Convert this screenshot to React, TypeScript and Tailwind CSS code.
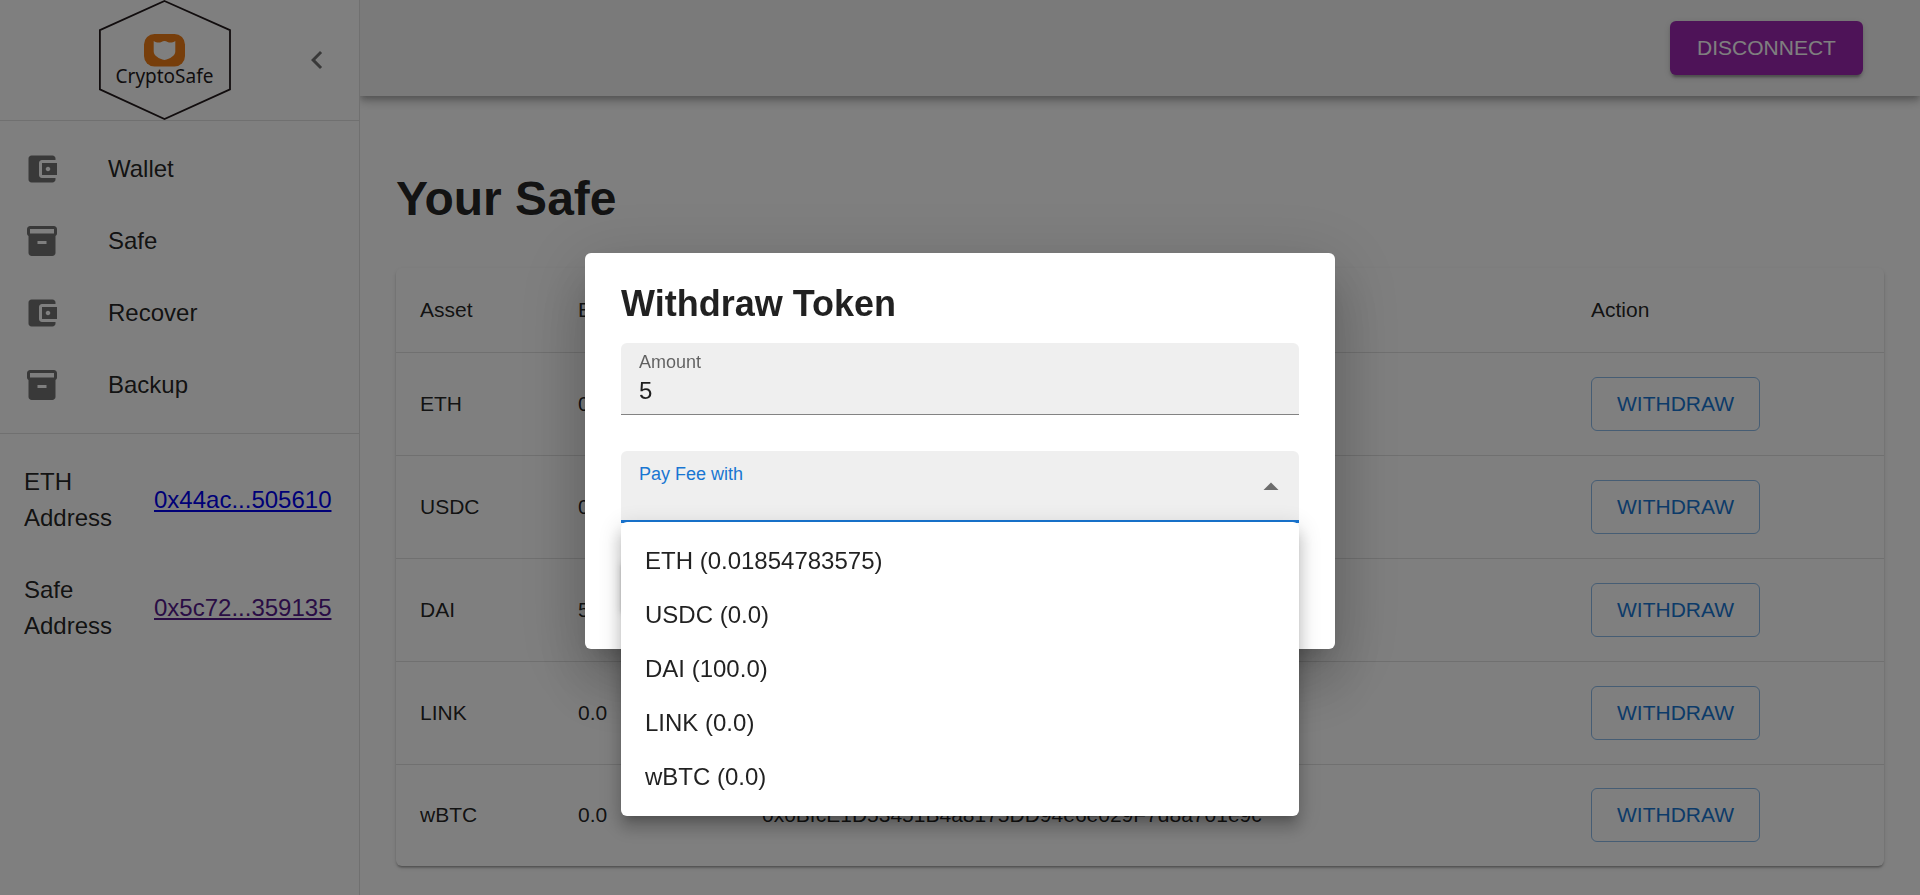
import React, { useState } from "react";

const WALLET_PATH =
  "M21 18v1c0 1.1-.9 2-2 2H5c-1.11 0-2-.9-2-2V5c0-1.1.89-2 2-2h14c1.1 0 2 .9 2 2v1h-9c-1.11 0-2 .9-2 2v8c0 1.1.89 2 2 2h9zm-9-2h10V8H12v8zm4-2.5c-.83 0-1.5-.67-1.5-1.5s.67-1.5 1.5-1.5 1.5.67 1.5 1.5-.67 1.5-1.5 1.5z";
const SAFE_PATH =
  "M20 2H4c-1 0-2 .9-2 2v3.01c0 .72.43 1.34 1 1.69V20c0 1.1 1.1 2 2 2h14c.9 0 2-.9 2-2V8.7c.57-.35 1-.97 1-1.69V4c0-1.1-1-2-2-2zm-5 12H9v-2h6v2zm5-7H4V4l16-.02V7z";
const CHEVRON_LEFT_PATH = "M15.41 7.41 14 6l-6 6 6 6 1.41-1.41L10.83 12z";
const ARROW_UP_PATH = "M7 14l5-5 5 5z";

const NAV = [
  { label: "Wallet", icon: WALLET_PATH },
  { label: "Safe", icon: SAFE_PATH },
  { label: "Recover", icon: WALLET_PATH },
  { label: "Backup", icon: SAFE_PATH },
];

const ADDRESSES = [
  { label: "ETH Address", value: "0x44ac...505610", color: "text-[#0000ee]" },
  { label: "Safe Address", value: "0x5c72...359135", color: "text-[#551a8b]" },
];

const ASSETS = [
  { name: "ETH", balance: "0.0", address: "" },
  { name: "USDC", balance: "0.0", address: "" },
  { name: "DAI", balance: "5.0", address: "" },
  { name: "LINK", balance: "0.0", address: "" },
  {
    name: "wBTC",
    balance: "0.0",
    address: "0x0BfcE1D53451B4a8175DD94e6e029F7d8a701e9c",
  },
];

const FEE_OPTIONS = [
  "ETH (0.01854783575)",
  "USDC (0.0)",
  "DAI (100.0)",
  "LINK (0.0)",
  "wBTC (0.0)",
];

function Icon({ path }: { path: string }) {
  return (
    <svg viewBox="0 0 24 24" className="size-9 shrink-0 fill-black/55" aria-hidden="true">
      <path d={path} />
    </svg>
  );
}

function Logo() {
  return (
    <svg
      viewBox="0 0 132 120"
      className="h-[120px] w-[132px]"
      role="img"
      aria-label="CryptoSafe logo"
    >
      <path
        d="M65.5 1 131 30.2v59.2L65.5 119 0.9 89.4V30.2z"
        fill="none"
        stroke="#231a1c"
        strokeWidth="1.8"
      />
      <rect x="45" y="34" width="41" height="32.5" rx="10.5" fill="#ee7d16" />
      <path
        d="M54.7 41c2.6 1.7 5.6 1.9 7.7.9 1.200-.6 2-.9 3.100-.9s1.900.3 3.100.9c2.100 1 5.100.8 7.700-.9v10.500c0 4.200-5.300 7.300-10.800 8.500-5.500-1.200-10.800-4.300-10.800-8.500z"
        fill="#fff"
      />
      <text
        x="65.5"
        y="83"
        textAnchor="middle"
        fontSize="19"
        fill="#231a1c"
        fontFamily='"Noto Sans", sans-serif'
      >
        CryptoSafe
      </text>
    </svg>
  );
}

function Sidebar() {
  return (
    <aside className="relative z-10 w-[360px] shrink-0 border-r border-black/12 bg-white">
      <div className="flex h-[120px] items-center justify-end gap-14 pr-3">
        <Logo />
        <button type="button" aria-label="Collapse menu" className="rounded-full p-3">
          <Icon path={CHEVRON_LEFT_PATH} />
        </button>
      </div>
      <nav className="border-y border-black/12 py-3">
        {NAV.map((item) => (
          <a key={item.label} href="#" className="flex h-[72px] items-center gap-12 px-6">
            <Icon path={item.icon} />
            <span>{item.label}</span>
          </a>
        ))}
      </nav>
      <dl className="py-3">
        {ADDRESSES.map((row) => (
          <div
            key={row.label}
            className="flex items-center justify-between gap-6 px-6 py-[18px] leading-9"
          >
            <dt className="w-24">{row.label}</dt>
            <dd className="w-[181px]">
              <a href="#" className={`underline ${row.color}`}>
                {row.value}
              </a>
            </dd>
          </div>
        ))}
      </dl>
    </aside>
  );
}

function AssetTable() {
  return (
    <div className="rounded-md bg-white shadow-[0_3px_2px_-2px_rgba(0,0,0,0.2),0_2px_2px_0_rgba(0,0,0,0.14),0_2px_5px_0_rgba(0,0,0,0.12)]">
      <table className="w-full table-fixed text-left text-[21px] leading-[30px]">
        <thead>
          <tr className="h-[84px] border-b border-[#e0e0e0]">
            <th className="w-[158px] px-6 font-normal">Asset</th>
            <th className="w-[184px] px-6 font-normal">Balance</th>
            <th className="px-6 font-normal">Address</th>
            <th className="w-[317px] px-6 font-normal">Action</th>
          </tr>
        </thead>
        <tbody>
          {ASSETS.map((asset) => (
            <tr
              key={asset.name}
              className="h-[103px] border-b border-[#e0e0e0] last:h-[102px] last:border-b-0"
            >
              <td className="px-6">{asset.name}</td>
              <td className="px-6">{asset.balance}</td>
              <td className="px-6">{asset.address}</td>
              <td className="px-6">
                <button
                  type="button"
                  className="block h-[54px] min-w-[169px] rounded-md border border-[#1976d2]/50 px-5 text-[#1976d2] uppercase"
                >
                  Withdraw
                </button>
              </td>
            </tr>
          ))}
        </tbody>
      </table>
    </div>
  );
}

function WithdrawDialog() {
  const [amount, setAmount] = useState("5");
  const [fee, setFee] = useState("");

  return (
    <div className="fixed inset-0 z-20 flex items-start justify-center bg-black/50 pt-[253px]">
      <div
        role="dialog"
        aria-labelledby="withdraw-title"
        className="w-[750px] rounded-md bg-white px-9 pt-[29px] pb-9 shadow-[0_17px_23px_-11px_rgba(0,0,0,0.2),0_36px_57px_5px_rgba(0,0,0,0.14),0_14px_69px_12px_rgba(0,0,0,0.12)]"
      >
        <h2 id="withdraw-title" className="mb-[17px] text-4xl leading-[44px] font-bold">
          Withdraw Token
        </h2>

        <div className="mb-9 flex h-[72px] flex-col rounded-t-md border-b border-black/45 bg-[#efefef] px-[18px] pt-[7px]">
          <label htmlFor="amount" className="text-lg leading-6 text-black/60">
            Amount
          </label>
          <input
            id="amount"
            value={amount}
            onChange={(e) => setAmount(e.target.value)}
            className="h-[34px] w-full bg-transparent outline-none"
          />
        </div>

        <div className="relative mb-9">
          <div className="flex h-[72px] justify-between rounded-t-md border-b-3 border-[#1976d2] bg-[#efefef] pr-[10px] pl-[18px]">
            <div className="flex grow flex-col pt-[11px]">
              <label htmlFor="fee" className="text-lg leading-6 text-[#1976d2]">
                Pay Fee with
              </label>
              <select
                id="fee"
                value={fee}
                onChange={(e) => setFee(e.target.value)}
                className="h-[30px] w-full appearance-none bg-transparent outline-none"
              >
                <option value=""></option>
                {FEE_OPTIONS.map((option) => (
                  <option key={option}>{option}</option>
                ))}
              </select>
            </div>
            <div className="flex items-center pt-[3px]">
              <Icon path={ARROW_UP_PATH} />
            </div>
          </div>

          <ul
            role="listbox"
            aria-label="Pay Fee with"
            className="absolute inset-x-0 top-[71px] z-10 rounded-md bg-white py-3 shadow-[0_8px_8px_-5px_rgba(0,0,0,0.2),0_12px_15px_2px_rgba(0,0,0,0.14),0_5px_21px_3px_rgba(0,0,0,0.12)]"
          >
            {FEE_OPTIONS.map((option) => (
              <li
                key={option}
                role="option"
                aria-selected={fee === option}
                onClick={() => setFee(option)}
                className="cursor-pointer px-6 py-[9px] leading-9"
              >
                {option}
              </li>
            ))}
          </ul>
        </div>

        <button
          type="button"
          className="block h-[54px] rounded-md bg-[#1976d2] px-6 text-[21px] text-white uppercase shadow-[0_3px_3px_0_rgba(0,0,0,0.14),0_2px_8px_0_rgba(0,0,0,0.12)]"
        >
          Withdraw
        </button>
      </div>
    </div>
  );
}

export default function App() {
  return (
    <div className="flex min-h-screen bg-white font-['Liberation_Sans',Arial,sans-serif] text-2xl text-black/87">
      <Sidebar />
      <div className="flex min-w-0 grow flex-col">
        <header className="flex h-24 items-center justify-end bg-[#f5f5f5] pr-[57px] shadow-[0_3px_6px_-1px_rgba(0,0,0,0.2),0_6px_8px_0_rgba(0,0,0,0.14),0_2px_15px_0_rgba(0,0,0,0.12)]">
          <button
            type="button"
            className="h-[54px] min-w-[193px] rounded-md bg-[#9c27b0] px-6 text-[21px] font-medium text-white uppercase shadow-[0_5px_2px_-3px_rgba(0,0,0,0.2),0_3px_3px_0_rgba(0,0,0,0.14),0_2px_8px_0_rgba(0,0,0,0.12)]"
          >
            Disconnect
          </button>
        </header>
        <main className="px-9 pt-[75px]">
          <h1 className="mb-[41px] text-5xl leading-[56px] font-bold">Your Safe</h1>
          <AssetTable />
        </main>
      </div>
      <WithdrawDialog />
    </div>
  );
}
